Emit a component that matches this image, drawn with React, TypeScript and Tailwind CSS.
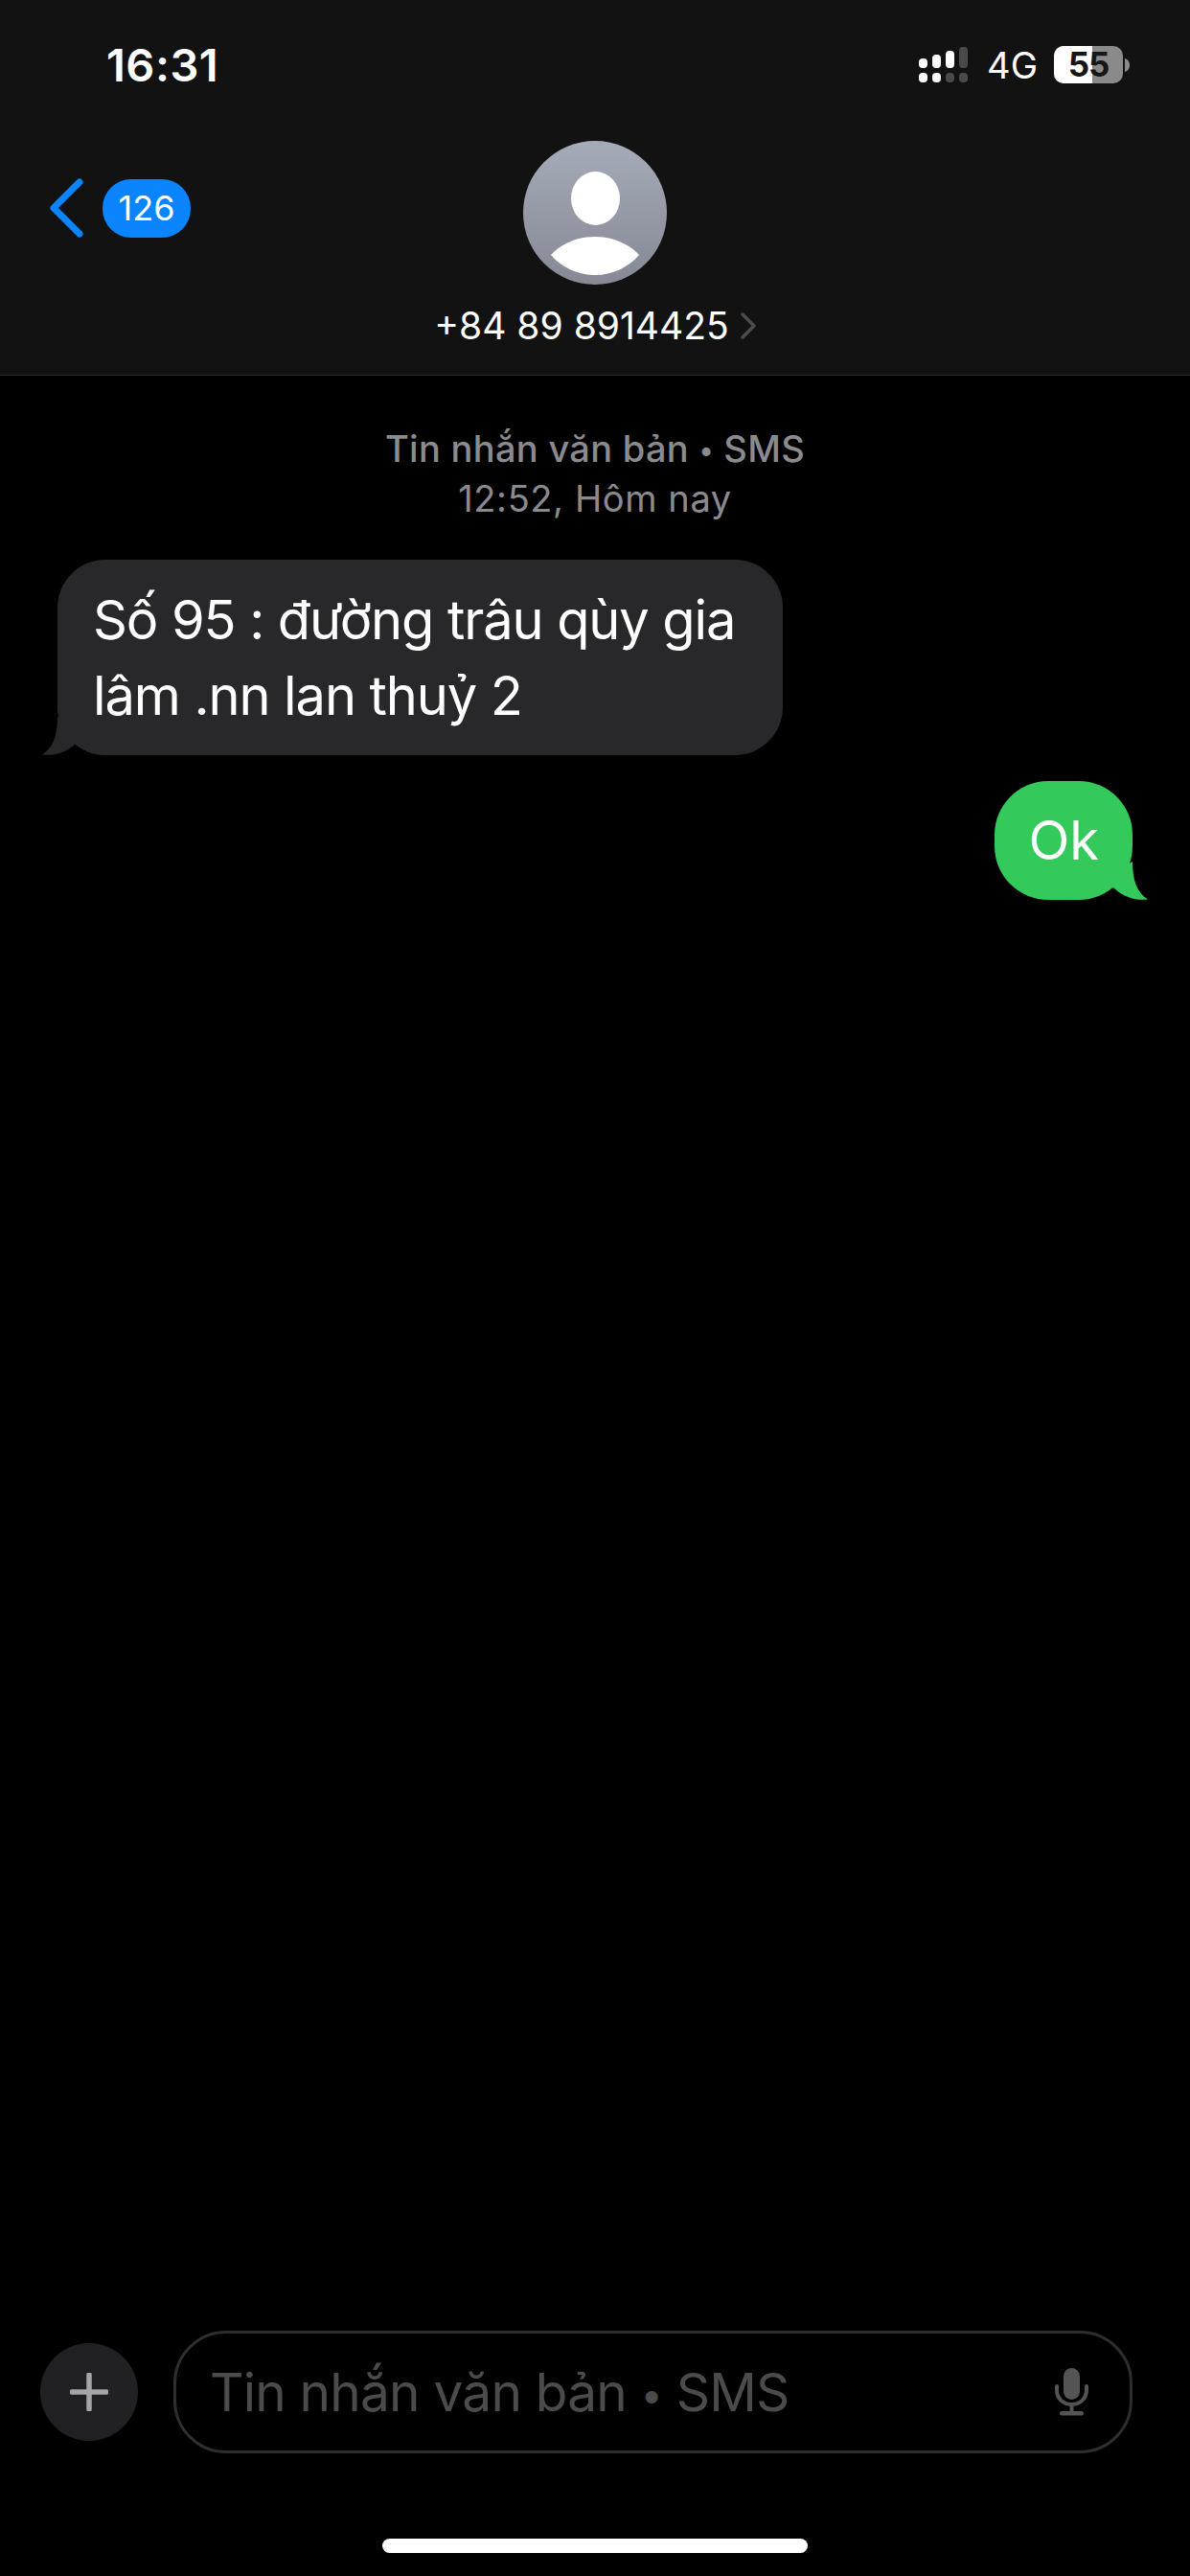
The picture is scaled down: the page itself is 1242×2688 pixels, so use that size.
const INTER = "font-['Inter','Liberation_Sans',sans-serif]";

function SignalIcon() {
  return (
    <svg width="52" height="38" viewBox="0 0 52 38">
      <rect x="0" y="12" width="9" height="10" rx="4" fill="#fff" />
      <rect x="14" y="8" width="9" height="14" rx="4" fill="#fff" />
      <rect x="28" y="4" width="9" height="18" rx="4" fill="#fff" />
      <rect x="42" y="0" width="9" height="22" rx="4" fill="#4a4a4a" />
      <rect x="0" y="27" width="9" height="10" rx="4" fill="#fff" />
      <rect x="14" y="27" width="9" height="10" rx="4" fill="#fff" />
      <rect x="28" y="27" width="9" height="10" rx="4" fill="#4a4a4a" />
      <rect x="42" y="27" width="9" height="10" rx="4" fill="#4a4a4a" />
    </svg>
  );
}

function Battery() {
  return (
    <div className="flex items-center">
      <div className="relative h-[39px] w-[72px] rounded-[10px] bg-[#8a8a8a]">
        <div className="h-full w-[40px] rounded-l-[10px] bg-white" />
        <div className={`absolute inset-0 flex items-center justify-center text-[35px] font-bold leading-none tracking-[-1px] text-[#161616] ${INTER}`}>
          55
        </div>
      </div>
      <svg width="6" height="14" viewBox="0 0 6 14" className="ml-[2px]">
        <path d="M0 0 C3.5 1 5 4 5 7 C5 10 3.5 13 0 14 Z" fill="#8a8a8a" />
      </svg>
    </div>
  );
}

function AvatarIcon() {
  return (
    <svg width="150" height="150" viewBox="0 0 150 150">
      <defs>
        <linearGradient id="av" x1="0" y1="0" x2="0" y2="1">
          <stop offset="0" stopColor="#a6abb9" />
          <stop offset="1" stopColor="#858994" />
        </linearGradient>
      </defs>
      <circle cx="75" cy="75" r="75" fill="url(#av)" />
      <ellipse cx="75.5" cy="60" rx="25.5" ry="28" fill="#fff" />
      <path d="M29 119 C40 107 57 100 75 100 C93 100 110 107 121 119 C110 132 93 140 75 140 C57 140 40 132 29 119 Z" fill="#fff" />
    </svg>
  );
}

function Header() {
  return (
    <header className="h-[392px] shrink-0 border-b border-[#2c2c2c] bg-[#121212] text-white">
      <div className="flex h-[147px] items-start justify-between">
        <span className={`ml-[111px] mt-[40px] text-[47px] font-semibold leading-[56px] tracking-[0.5px] ${INTER}`}>16:31</span>
        <div className="mr-[62px] mt-[48px] flex items-center">
          <SignalIcon />
          <span className={`ml-[19px] mr-[17px] text-[38px] font-normal leading-none ${INTER}`}>4G</span>
          <Battery />
        </div>
      </div>
      <div className="relative flex flex-col items-center">
        <div className="absolute left-[51px] top-[39px] flex items-center gap-[20px]">
          <svg width="36" height="62" viewBox="0 0 36 62" fill="none">
            <path d="M32 4 L5 31 L32 58" stroke="#0a84ff" strokeWidth="7" strokeLinecap="round" strokeLinejoin="round" />
          </svg>
          <span className={`flex h-[61px] w-[92px] items-center justify-center rounded-[30px] bg-[#0a84ff] text-[36px] leading-none ${INTER}`}>126</span>
        </div>
        <AvatarIcon />
        <div className="mt-[20px] flex items-center">
          <span className={`text-[39px] leading-[46px] ${INTER}`}>+84 89 8914425</span>
          <svg width="16" height="28" viewBox="0 0 16 28" fill="none" className="ml-[12px]">
            <path d="M2 2 L14 14 L2 26" stroke="#4c4c4c" strokeWidth="3.5" strokeLinecap="round" strokeLinejoin="round" />
          </svg>
        </div>
      </div>
    </header>
  );
}

function IncomingBubble() {
  return (
    <div className="relative ml-[60px] w-[757px]">
      <div className={`rounded-[50px] bg-[#28282a] px-[37px] pb-[22px] pt-[24px] text-[56px] leading-[79px] tracking-[-1.1px] text-white ${INTER}`}>
        Số 95 : đường trâu qùy gia lâm .nn lan thuỷ 2
      </div>
      <svg width="50" height="40" viewBox="0 0 50 40" className="absolute bottom-0 left-[-16px]">
        <path d="M16 0 C16 18 12 32 0 39.5 C12 41 24 38 35 28 L50 20 Z" fill="#28282a" />
      </svg>
    </div>
  );
}

function OutgoingBubble() {
  return (
    <div className="relative mr-[60px] mt-[27px] self-end">
      <div className={`rounded-[56px] bg-[#34c95b] px-[35px] py-[23px] text-[56px] leading-[78px] text-white ${INTER}`}>
        Ok
      </div>
      <svg width="50" height="40" viewBox="0 0 50 40" className="absolute bottom-0 right-[-16px]">
        <path d="M34 0 C34 18 38 32 50 39.5 C38 41 26 38 15 28 L0 20 Z" fill="#34c95b" />
      </svg>
    </div>
  );
}

function Composer() {
  return (
    <div className="flex items-center pl-[42px] pr-[60px]">
      <div className="flex h-[102px] w-[102px] shrink-0 items-center justify-center rounded-full bg-[#212123]">
        <svg width="40" height="40" viewBox="0 0 40 40" fill="none">
          <path d="M20 2 V38 M2 20 H38" stroke="#a5a5a7" strokeWidth="5.5" strokeLinecap="round" />
        </svg>
      </div>
      <div className="ml-[37px] flex h-[128px] flex-1 items-center justify-between rounded-[55px] border-[3px] border-[#2e2e2e] pl-[35px] pr-[42px]">
        <span className={`text-[55px] leading-none tracking-[-0.8px] text-[#4b4b4b] ${INTER}`}>
          Tin nhắn văn bản <span className="align-[0.08em] text-[0.75em]">•</span> SMS
        </span>
        <svg width="36" height="50" viewBox="0 0 36 50" fill="none">
          <rect x="9" y="0" width="17" height="33" rx="8.5" fill="#545456" />
          <path d="M2 19 V23 C2 32 9 38 17.5 38 C26 38 33 32 33 23 V19" stroke="#545456" strokeWidth="4" strokeLinecap="round" />
          <path d="M17.5 38 V47" stroke="#545456" strokeWidth="4" />
          <rect x="5" y="45" width="25" height="4.5" rx="2.2" fill="#545456" />
        </svg>
      </div>
    </div>
  );
}

export default function App() {
  return (
    <div className={`flex h-[2688px] w-[1242px] flex-col overflow-hidden bg-black ${INTER}`}>
      <Header />
      <main className="flex flex-1 flex-col">
        <div className="mt-[51px] flex flex-col items-center text-[38px] leading-[50px] text-[#8b8b8f]">
          <span className="font-medium tracking-[0.3px]">
            Tin nhắn văn bản <span className="align-[0.08em] text-[0.75em]">•</span> SMS
          </span>
          <span className="tracking-[0.6px]">12:52, Hôm nay</span>
        </div>
        <div className="mt-[39px] flex flex-col">
          <IncomingBubble />
          <OutgoingBubble />
        </div>
      </main>
      <Composer />
      <div className="flex h-[128px] shrink-0 items-start justify-center pt-[89px]">
        <div className="h-[15px] w-[444px] rounded-full bg-white" />
      </div>
    </div>
  );
}
